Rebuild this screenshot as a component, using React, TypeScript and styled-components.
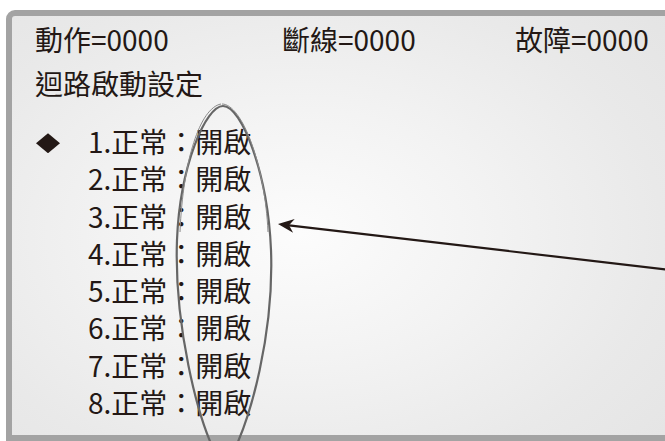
import styled, { createGlobalStyle } from "styled-components";

const GlobalStyle = createGlobalStyle`
  html,
  body {
    margin: 0;
    padding: 0;
    background: #ffffff;
    overflow: hidden;
  }
`;

const Page = styled.div`
  position: relative;
  width: 665px;
  height: 441px;
  overflow: hidden;
  box-sizing: border-box;
  padding: 10px 0 0 6px;
  background: #ffffff;
`;

const Panel = styled.div`
  width: 700px;
  height: 431px;
  box-sizing: border-box;
  border: 6px solid #a3a3a3;
  border-top-left-radius: 9px;
  background: radial-gradient(
    ellipse 75% 85% at 42% 52%,
    #fcfcfc 0%,
    #f3f3f3 35%,
    #e9e9e9 70%,
    #e3e3e3 100%
  );
  padding: 1px 0 0 23px;
  color: #231815;
  font-family: "Noto Sans CJK TC", "Noto Sans", sans-serif;
  font-size: 28px;
`;

const Header = styled.div`
  display: grid;
  grid-template-columns: 247px 233px max-content;
  line-height: 44px;
`;

const Title = styled.div`
  line-height: 44px;
`;

const List = styled.ul`
  list-style: none;
  margin: 18px 0 0 0;
  padding: 0;
  display: flex;
  flex-direction: column;
`;

const Row = styled.li`
  display: flex;
  align-items: center;
  height: 37.3px;
  line-height: 37.3px;
`;

const MarkerSlot = styled.span`
  flex: none;
  width: 53px;
  display: flex;
  align-items: center;
`;

const Diamond = styled.span`
  width: 24px;
  height: 20px;
  margin: 3px 0 0 1px;
  background: #231815;
  clip-path: polygon(50% 0, 100% 50%, 50% 100%, 0 50%);
`;

const Overlay = styled.svg`
  position: absolute;
  top: 0;
  left: 0;
  pointer-events: none;
`;

const counters = ["動作=0000", "斷線=0000", "故障=0000"];
const loops = [1, 2, 3, 4, 5, 6, 7, 8];

export default function App() {
  return (
    <>
      <GlobalStyle />
      <Page>
        <Panel>
          <Header>
            {counters.map((c) => (
              <span key={c}>{c}</span>
            ))}
          </Header>
          <Title>迴路啟動設定</Title>
          <List>
            {loops.map((n) => (
              <Row key={n}>
                <MarkerSlot>{n === 1 && <Diamond />}</MarkerSlot>
                <span>{n}.正常：開啟</span>
              </Row>
            ))}
          </List>
        </Panel>

        <Overlay width="665" height="441" viewBox="0 0 665 441">
          {/* hand drawn ring round the state column */}
          <path
            d="M223,106 C206,106 180,165 177,240 C174,320 196,420 220,462 M223,106 C242,106 268,175 271,250 C274,330 252,420 228,462"
            fill="none"
            stroke="#666666"
            strokeWidth="2.2"
          />
          <path
            d="M221,104 C200,108 183,160 180,232 M222,104 C242,104 265,165 268,232"
            fill="none"
            stroke="#8a8a8a"
            strokeWidth="1"
          />
          {/* pointer */}
          <line x1="670" y1="270" x2="289" y2="225.3" stroke="#231815" strokeWidth="2.2" />
          <polygon points="278,224 294.7,218.9 289,225.3 293.1,232.8" fill="#231815" />
        </Overlay>
      </Page>
    </>
  );
}
